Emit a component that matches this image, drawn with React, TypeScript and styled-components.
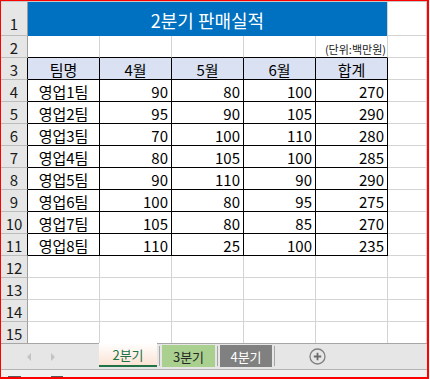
import { FC } from 'react';
import styled, { createGlobalStyle } from 'styled-components';

const GRID = '#d4d4d4';
const HEAD_LINE = '#bcbcbc';
const FONT = `"Noto Sans CJK KR", "Noto Sans", sans-serif`;

const GlobalStyle = createGlobalStyle`
  html, body {
    margin: 0;
    padding: 0;
    background: #fff;
  }
  body {
    font-family: ${FONT};
  }
`;

const months = ['4월', '5월', '6월'];

const teams: [string, number, number, number, number][] = [
  ['영업1팀', 90, 80, 100, 270],
  ['영업2팀', 95, 90, 105, 290],
  ['영업3팀', 70, 100, 110, 280],
  ['영업4팀', 80, 105, 100, 285],
  ['영업5팀', 90, 110, 90, 290],
  ['영업6팀', 100, 80, 95, 275],
  ['영업7팀', 105, 80, 85, 270],
  ['영업8팀', 110, 25, 100, 235],
];

const Frame = styled.div`
  width: 429px;
  height: 379px;
  box-sizing: border-box;
  border-style: solid;
  border-color: #ff0000;
  border-width: 1px 2px 2px 1px;
  display: flex;
  flex-direction: column;
  overflow: hidden;
  background: #fff;
`;

const Sheet = styled.div`
  display: grid;
  grid-template-columns: 27px repeat(5, 72px) 1fr;
  grid-template-rows: 34px repeat(14, 22px);
  border-top: 1px solid #c6c6c6;
`;

const RowHead = styled.div<{ $edge?: string; $tall?: boolean }>`
  box-sizing: border-box;
  background: #e6e6e6;
  border-right: 1px solid ${(p) => p.$edge || '#9e9e9e'};
  border-bottom: 1px solid ${HEAD_LINE};
  display: flex;
  justify-content: center;
  align-items: ${(p) => (p.$tall ? 'flex-end' : 'center')};
  padding-bottom: ${(p) => (p.$tall ? '4px' : '0')};
  padding-top: ${(p) => (p.$tall ? '0' : '2px')};
  font-size: 15px;
  line-height: 1;
  color: #1a1a1a;
`;

const Cell = styled.div<{
  $align?: 'left' | 'center' | 'right';
  $bg?: string;
  $right?: string;
  $bottom?: string;
}>`
  box-sizing: border-box;
  background: ${(p) => p.$bg || '#fff'};
  border-right: 1px solid ${(p) => p.$right || GRID};
  border-bottom: 1px solid ${(p) => p.$bottom || GRID};
  display: flex;
  align-items: center;
  justify-content: ${(p) =>
    p.$align === 'right' ? 'flex-end' : p.$align === 'center' ? 'center' : 'flex-start'};
  padding: 1px 3px 0 3px;
  font-size: 15px;
  line-height: 1;
  color: #000;
  white-space: nowrap;
`;

const Title = styled.div`
  grid-column: 2 / 7;
  box-sizing: border-box;
  background: #0070c0;
  border-right: 1px solid ${GRID};
  display: flex;
  align-items: center;
  justify-content: center;
  padding-top: 1px;
  color: #fff;
  font-size: 18px;
  line-height: 1;
`;

const Unit = styled(Cell)`
  align-items: flex-end;
  padding-bottom: 2px;
  padding-right: 1px;
  font-size: 11px;
  color: #1a1a1a;
`;

const TabBar = styled.div`
  flex: 1;
  display: flex;
  align-items: flex-start;
  background: #e6e6e6;
  border-top: 1px solid #a6a6a6;
  margin-top: -1px;
`;

const Nav = styled.div`
  width: 98px;
  height: 24px;
  display: flex;
  align-items: center;
  padding-left: 26px;
  gap: 20px;
  box-sizing: border-box;
`;

const Arrow = styled.span<{ $dir: 'left' | 'right' }>`
  width: 0;
  height: 0;
  border-top: 4px solid transparent;
  border-bottom: 4px solid transparent;
  ${(p) =>
    p.$dir === 'left'
      ? 'border-right: 4px solid #c3c3c3;'
      : 'border-left: 4px solid #c3c3c3;'}
  margin-top: 1px;
`;

const Tab = styled.div<{ $bg: string; $color: string; $active?: boolean; $w: number }>`
  width: ${(p) => p.$w}px;
  height: ${(p) => (p.$active ? 24 : 22)}px;
  margin-top: ${(p) => (p.$active ? -1 : 1)}px;
  box-sizing: border-box;
  background: ${(p) => p.$bg};
  border-bottom: ${(p) => (p.$active ? '2px solid #217346' : 'none')};
  color: ${(p) => p.$color};
  display: flex;
  align-items: center;
  justify-content: center;
  padding-top: ${(p) => (p.$active ? 0 : 1)}px;
  font-size: 13px;
  line-height: 1;
`;

const Divider = styled.span`
  width: 1px;
  height: 20px;
  margin: 2px 2px 0;
  background: #a6a6a6;
`;

const AddSheet = styled.button`
  margin: 4px 0 0 32px;
  width: 17px;
  height: 17px;
  padding: 0;
  border: none;
  background: transparent;
  display: flex;
  align-items: center;
  justify-content: center;
`;

const StatusBar = styled.div`
  height: 7px;
  flex: none;
  background: #f1f1f1;
  border-top: 1px solid #b4b4b4;
  display: flex;
  align-items: flex-end;
  padding-left: 7px;
  gap: 30px;
`;

const StatusMark = styled.span<{ $w: number }>`
  width: ${(p) => p.$w}px;
  height: 1px;
  background: #5a5a5a;
`;

const App: FC = () => {
  const rows = 15;
  const cells: JSX.Element[] = [];

  for (let r = 1; r <= rows; r++) {
    const inTable = r >= 3 && r <= 11;
    cells.push(
      <RowHead key={`h${r}`} $tall={r === 1} $edge={inTable ? '#000' : undefined}>
        {r}
      </RowHead>
    );

    if (r === 1) {
      cells.push(<Title key="title">2분기 판매실적</Title>);
      cells.push(<Cell key="1f" />);
      continue;
    }

    if (r === 2) {
      for (let c = 0; c < 5; c++) {
        if (c === 4) {
          cells.push(
            <Unit key="2e" $align="right" $bottom="#000">
              (단위:백만원)
            </Unit>
          );
        } else {
          cells.push(<Cell key={`2${c}`} $bottom="#000" />);
        }
      }
      cells.push(<Cell key="2f" />);
      continue;
    }

    if (r === 3) {
      ['팀명', ...months, '합계'].forEach((label) =>
        cells.push(
          <Cell key={`3${label}`} $align="center" $bg="#d9e1f2" $right="#000" $bottom="#000">
            {label}
          </Cell>
        )
      );
      cells.push(<Cell key="3f" />);
      continue;
    }

    if (inTable) {
      const [name, ...nums] = teams[r - 4];
      cells.push(
        <Cell key={`${r}n`} $align="center" $right="#000" $bottom="#000">
          {name}
        </Cell>
      );
      nums.forEach((n, i) =>
        cells.push(
          <Cell key={`${r}${i}`} $align="right" $right="#000" $bottom="#000">
            {n}
          </Cell>
        )
      );
      cells.push(<Cell key={`${r}f`} />);
      continue;
    }

    for (let c = 0; c < 6; c++) {
      cells.push(<Cell key={`${r}-${c}`} />);
    }
  }

  return (
    <>
      <GlobalStyle />
      <Frame>
        <Sheet>{cells}</Sheet>
        <TabBar>
          <Nav>
            <Arrow $dir="left" />
            <Arrow $dir="right" />
          </Nav>
          <Tab $w={58} $active $bg="linear-gradient(#ffffff, #fbe3d4)" $color="#217346">
            2분기
          </Tab>
          <Divider />
          <Tab $w={53} $bg="#a9d08e" $color="#262626">
            3분기
          </Tab>
          <Divider />
          <Tab $w={52} $bg="#808080" $color="#ffffff">
            4분기
          </Tab>
          <Divider />
          <AddSheet aria-label="새 시트">
            <svg width="17" height="17" viewBox="0 0 17 17">
              <circle cx="8.5" cy="8.5" r="7.5" fill="none" stroke="#808080" strokeWidth="1.3" />
              <path d="M8.5 4.8v7.4M4.8 8.5h7.4" stroke="#6a6a6a" strokeWidth="1.8" />
            </svg>
          </AddSheet>
        </TabBar>
        <StatusBar>
          <StatusMark $w={13} />
          <StatusMark $w={12} />
        </StatusBar>
      </Frame>
    </>
  );
};

export default App;
